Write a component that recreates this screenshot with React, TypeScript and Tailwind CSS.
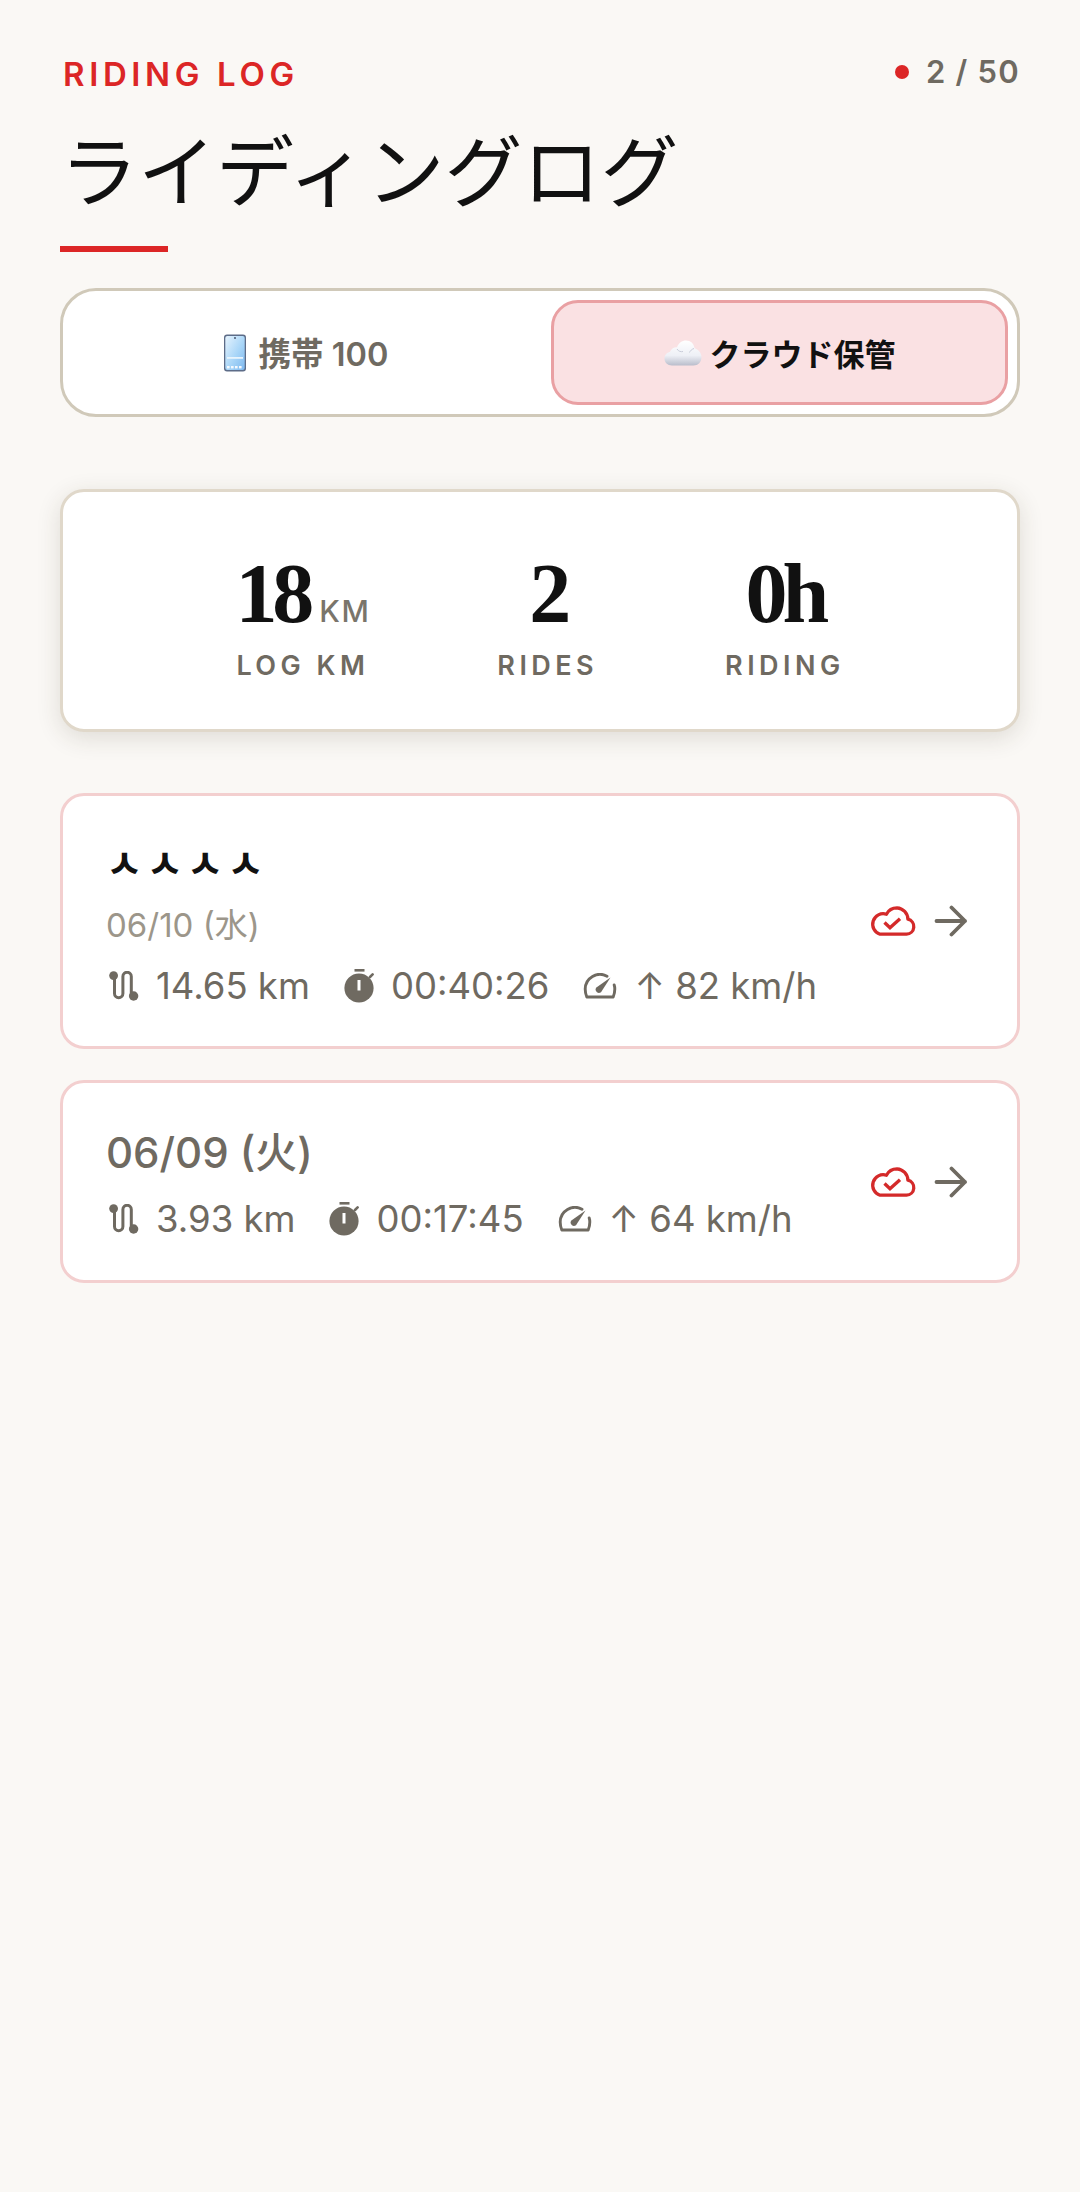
import React from "react";

const sans = `font-['Inter','Noto_Sans_CJK_JP',sans-serif]`;

function RouteIcon() {
  return (
    <svg width="30" height="30" viewBox="0 0 30 30" fill="none" className="shrink-0 ml-[3px] text-[#6f6a61]">
      <path d="M5.5 6V22.5a4.2 4.2 0 0 0 8.4 0V5.5a4.2 4.2 0 0 1 8.4 0V24" stroke="currentColor" strokeWidth="3" strokeLinecap="round" />
      <circle cx="4.6" cy="4.6" r="4.4" fill="currentColor" />
      <circle cx="24.6" cy="25" r="4.7" fill="currentColor" />
    </svg>
  );
}

function TimerIcon() {
  return (
    <svg width="30" height="34" viewBox="0 0 30 34" fill="none" className="shrink-0 text-[#6f6a61]">
      <rect x="10.500" y="0" width="10" height="2.600" fill="currentColor" />
      <circle cx="15" cy="19" r="14.600" fill="currentColor" />
      <path d="M26 8l2.600-2.600" stroke="currentColor" strokeWidth="2.600" strokeLinecap="round" />
      <rect x="13.500" y="11" width="3" height="10.500" fill="#fff" />
    </svg>
  );
}

function GaugeIcon() {
  return (
    <svg width="34" height="26" viewBox="0 0 34 26" fill="none" className="shrink-0 text-[#6f6a61]">
      <path d="M24 3.200A14.800 14.800 0 0 0 2.200 16c0 3.200.6 5.600 1.600 8h26.400c1-2.400 1.600-4.800 1.600-8 0-1.600-.2-2.800-.6-4" stroke="currentColor" strokeWidth="2.900" strokeLinecap="round" strokeLinejoin="round" />
      <path d="M27.500 4.500L18 19.200a3.400 3.400 0 0 1-5-4.400z" fill="currentColor" />
    </svg>
  );
}

function CloudCheck() {
  return (
    <svg width="46" height="30" viewBox="0 0 46 30" fill="none" className="shrink-0">
      <path d="M10 28.200h26.500a7.600 7.600 0 0 0 1.400-15A11.600 11.600 0 0 0 27 1.800a12 12 0 0 0-10.600 6.400A10.400 10.400 0 0 0 10 28.200z" stroke="#d42a2a" strokeWidth="3.300" strokeLinejoin="round" />
      <path d="M14.500 16.500l5.500 5.200 10-9" stroke="#d42a2a" strokeWidth="3.400" strokeLinecap="butt" />
    </svg>
  );
}

function ArrowIcon() {
  return (
    <svg width="34" height="32" viewBox="0 0 34 32" fill="none" className="shrink-0">
      <path d="M2.500 16H31M17.500 2.500L31 16 17.500 29.500" stroke="#6f6a61" strokeWidth="3.800" strokeLinecap="round" strokeLinejoin="round" />
    </svg>
  );
}

function PhoneEmoji() {
  return (
    <svg width="24" height="38" viewBox="0 0 24 38" className="shrink-0">
      <defs>
        <linearGradient id="ph" x1="0" y1="0" x2="1" y2="1">
          <stop offset="0" stopColor="#e6f3fd" />
          <stop offset="0.55" stopColor="#a9d6f8" />
          <stop offset="1" stopColor="#7db8ef" />
        </linearGradient>
      </defs>
      <rect x="1" y="0.5" width="22" height="37" rx="3" fill="#5d6c88" />
      <rect x="2.300" y="2" width="19.400" height="34" rx="2" fill="url(#ph)" />
      <circle cx="12" cy="4" r="0.9" fill="#3c4a63" />
      <rect x="4" y="23" width="16" height="1.800" fill="#e8f4fd" />
      <rect x="4" y="32" width="2.600" height="2.400" fill="#f4f9fe" />
      <rect x="8" y="32" width="2.600" height="2.400" fill="#f4f9fe" />
      <rect x="12" y="32" width="2.600" height="2.400" fill="#f4f9fe" />
      <rect x="16" y="32" width="2.600" height="2.400" fill="#f4f9fe" />
    </svg>
  );
}

function CloudEmoji() {
  return (
    <svg width="38" height="26" viewBox="0 0 38 26" className="shrink-0">
      <defs>
        <linearGradient id="cl" x1="0" y1="0" x2="0" y2="1">
          <stop offset="0" stopColor="#ffffff" />
          <stop offset="0.6" stopColor="#eef0f6" />
          <stop offset="1" stopColor="#b9bdcb" />
        </linearGradient>
      </defs>
      <path d="M8 25.500C3.500 25.500.5 22.500.5 18.500c0-3.500 2.300-6 5.500-6.800C7.500 8.500 10.500 7 13 7.300 14.500 3 18 .5 22 .5c4.500 0 8 3 8.500 7.500 3.500 1.500 7 4.500 7 9 0 5-3.500 8.500-8 8.500z" fill="url(#cl)" />
      <path d="M13 9c1.500 2.500 4 3 6 2.500M30 8.500c-2 .5-4 2.500-4.500 4" fill="none" stroke="#c9cdda" strokeWidth="1" />
    </svg>
  );
}

function Stat({ icon, children }: { icon: React.ReactNode; children: React.ReactNode }) {
  return (
    <div className="flex items-center gap-[17px]">
      {icon}
      <span className="whitespace-nowrap">{children}</span>
    </div>
  );
}

function Meta({ dist, time, speed }: { dist: string; time: string; speed: string }) {
  return (
    <div className="flex items-center gap-[34px] text-[36.5px] leading-[44px] text-[#6f6a61]">
      <Stat icon={<RouteIcon />}>{dist}</Stat>
      <Stat icon={<TimerIcon />}>{time}</Stat>
      <Stat icon={<GaugeIcon />}>↑ {speed}</Stat>
    </div>
  );
}

function Num({ big, small, label }: { big: string; small?: string; label: string }) {
  return (
    <div className="flex flex-col items-center">
      <div className="flex items-baseline gap-[10px] h-[96px] pt-[6px] box-content">
        <span className="font-['Liberation_Serif',serif] font-bold text-[84px] leading-[96px] tracking-[-0.06em] text-[#111111]">{big}</span>
        {small && <span className="text-[30px] font-medium tracking-[0.05em] text-[#7a756b]">{small}</span>}
      </div>
      <div className="mt-[8px] text-[27px] leading-[32px] font-semibold tracking-[0.165em] text-[#6f6a61] whitespace-nowrap">{label}</div>
    </div>
  );
}

function Right() {
  return (
    <div className="flex items-center gap-[18px]">
      <CloudCheck />
      <ArrowIcon />
    </div>
  );
}

export default function App() {
  return (
    <div className={`${sans} min-h-[2192px] bg-[#faf8f5] px-[60px] pt-[50px]`}>
      <div className="flex items-start justify-between">
        <div className="pl-[3px] text-[33px] leading-[48px] font-semibold tracking-[0.14em] text-[#dc2626]">RIDING LOG</div>
        <div className="flex items-center gap-[17px] h-[44px]">
          <span className="w-[14px] h-[14px] rounded-full bg-[#dc2626]" />
          <span className="text-[31px] font-semibold tracking-[0.04em] text-[#6f6a61]">2 / 50</span>
        </div>
      </div>
      <h1 className="mt-[29px] text-[78px] leading-[92px] font-normal text-[#111111]">ライディングログ</h1>
      <div className="mt-[27px] w-[108px] h-[6px] bg-[#dc2626]" />

      <div className="mt-[36px] h-[129px] flex gap-[12px] rounded-[36px] border-[3px] border-[#d0c9b9] bg-white p-[9px]">
        <div className="flex-1 flex items-center justify-center gap-[12px] text-[32.5px] font-semibold text-[#6f6a61]">
          <PhoneEmoji />
          <span className="pt-[6px]">携帯 100</span>
        </div>
        <div className="w-[457px] flex items-center justify-center gap-[8px] rounded-[27px] border-[3px] border-[#e9a0a3] bg-[#fae1e3] text-[31px] font-semibold text-[#111111]">
          <CloudEmoji />
          <span className="pt-[6px]">クラウド保管</span>
        </div>
      </div>

      <div className="mt-[72px] h-[243px] flex justify-center items-center gap-[127px] rounded-[24px] border-[3px] border-[#e0d8ca] bg-white shadow-[0_6px_24px_rgba(60,50,30,0.14)]">
        <Num big="18" small="KM" label="LOG KM" />
        <Num big="2" label="RIDES" />
        <Num big="0h" label="RIDING" />
      </div>

      <div className="mt-[61px] flex flex-col gap-[31px]">
        <div className="h-[256px] flex items-center justify-between rounded-[24px] border-[3px] border-[#f3cfcf] bg-white pl-[43px] pr-[49px]">
          <div className="flex flex-col">
            <div className="font-['Noto_Sans_CJK_KR',sans-serif] text-[40px] leading-[52px] font-bold tracking-[0.09em] text-[#111111]">ㅅㅅㅅㅅ</div>
            <div className="mt-[16px] text-[33px] leading-[44px] text-[#9c968a]">06/10 (水)</div>
            <div className="mt-[17px]"><Meta dist="14.65 km" time="00:40:26" speed="82 km/h" /></div>
          </div>
          <Right />
        </div>
        <div className="h-[203px] flex items-center justify-between rounded-[24px] border-[3px] border-[#f3cfcf] bg-white pl-[43px] pr-[49px]">
          <div className="flex flex-col pt-[4px]">
            <div className="text-[42px] leading-[52px] font-medium text-[#6f6a61]">06/09 (火)</div>
            <div className="mt-[18px]"><Meta dist="3.93 km" time="00:17:45" speed="64 km/h" /></div>
          </div>
          <Right />
        </div>
      </div>
    </div>
  );
}
